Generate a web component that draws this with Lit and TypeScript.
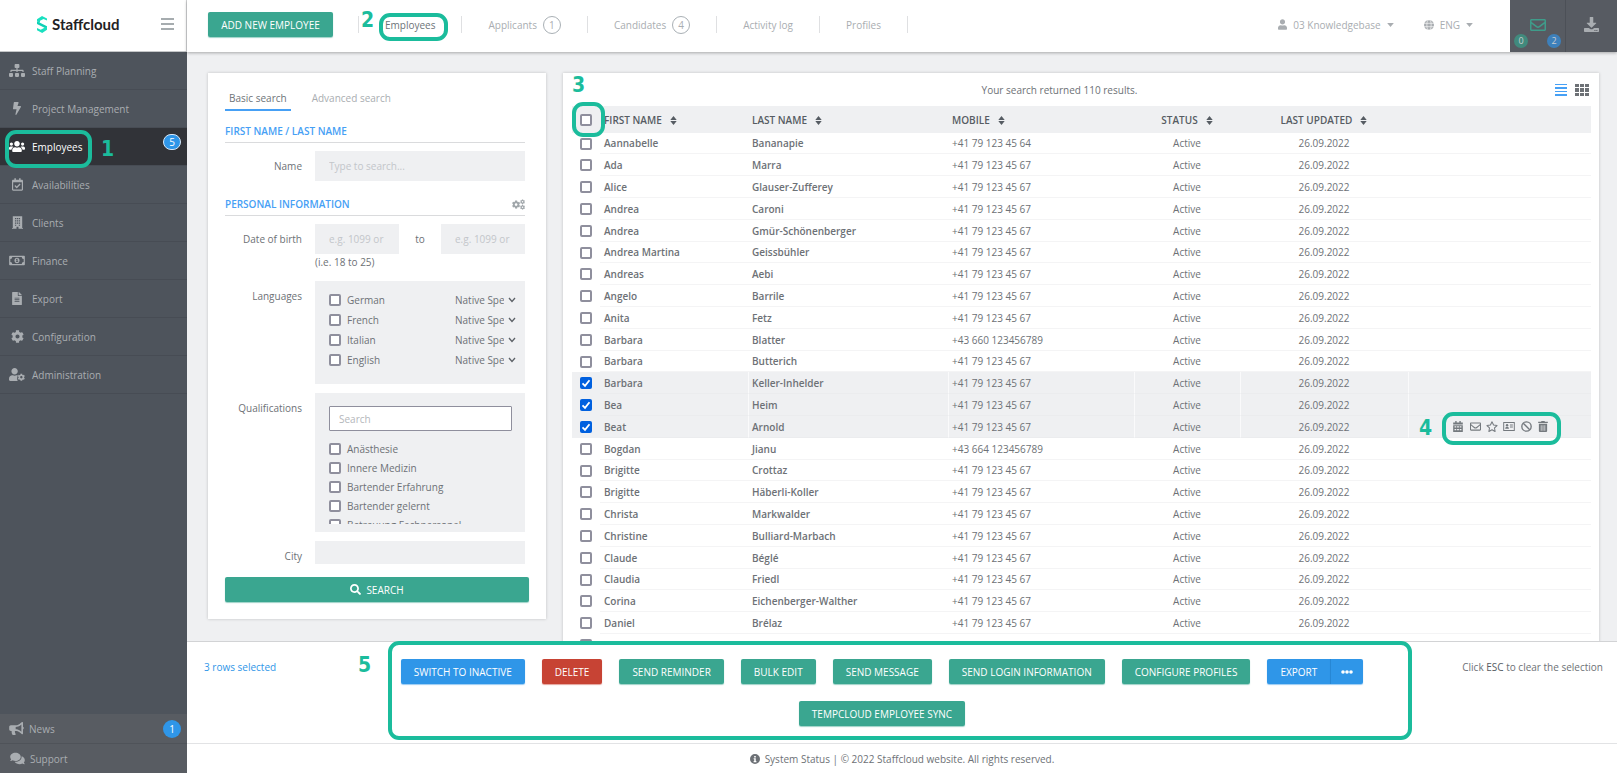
import { LitElement, html, svg, css, nothing } from "lit";
import type { SVGTemplateResult } from "lit";
import { customElement, state } from "lit/decorators.js";
import { classMap } from "lit/directives/class-map.js";

interface Glyph {
  box: string;
  body: SVGTemplateResult;
}

const COG =
  "M487.4 315.7l-42.6-24.6c4.3-23.2 4.3-47 0-70.2l42.6-24.6c4.9-2.8 7.1-8.6 5.5-14-11.1-35.6-30-67.8-54.7-94.6-3.8-4.1-10-5.1-14.8-2.3L380.8 110c-17.9-15.4-38.5-27.3-60.8-35.1V25.8c0-5.6-3.9-10.5-9.4-11.7-36.7-8.2-74.3-7.8-109.2 0-5.5 1.2-9.4 6.1-9.4 11.7V75c-22.2 7.9-42.8 19.8-60.8 35.1L88.7 85.5c-4.9-2.8-11-1.9-14.8 2.3-24.7 26.7-43.6 58.9-54.7 94.6-1.7 5.4.6 11.2 5.5 14L67.3 221c-4.3 23.2-4.3 47 0 70.2l-42.6 24.6c-4.9 2.8-7.1 8.6-5.5 14 11.1 35.6 30 67.8 54.7 94.6 3.8 4.1 10 5.1 14.8 2.3l42.6-24.6c17.9 15.4 38.5 27.3 60.8 35.1v49.2c0 5.6 3.9 10.5 9.4 11.7 36.7 8.2 74.3 7.8 109.2 0 5.5-1.2 9.4-6.1 9.4-11.7v-49.2c22.2-7.9 42.8-19.8 60.8-35.1l42.6 24.6c4.9 2.8 11 1.9 14.8-2.3 24.7-26.7 43.6-58.9 54.7-94.6 1.5-5.5-.7-11.3-5.6-14.1zM256 336c-44.1 0-80-35.9-80-80s35.9-80 80-80 80 35.9 80 80-35.9 80-80 80z";
const USER =
  "M224 256c70.7 0 128-57.3 128-128S294.7 0 224 0 96 57.3 96 128s57.3 128 128 128zm89.6 32h-16.7c-22.2 10.2-46.9 16-72.9 16s-50.6-5.8-72.9-16h-16.7C60.2 288 0 348.2 0 422.4V464c0 26.5 21.5 48 48 48h352c26.5 0 48-21.5 48-48v-41.6c0-74.2-60.2-134.4-134.4-134.4z";

const glyphs: Record<string, Glyph> = {
  sitemap: {
    box: "0 0 640 512",
    body: svg`<path d="M128 352H32c-17.67 0-32 14.33-32 32v96c0 17.67 14.33 32 32 32h96c17.67 0 32-14.33 32-32v-96c0-17.67-14.33-32-32-32zm-24-80h192v48h48v-48h192v48h48v-57.59c0-21.17-17.23-38.41-38.41-38.41H344v-64h40c17.67 0 32-14.33 32-32V32c0-17.67-14.33-32-32-32H256c-17.67 0-32 14.33-32 32v96c0 17.67 14.33 32 32 32h40v64H94.41C73.23 224 56 241.23 56 262.41V320h48v-48zm264 80h-96c-17.67 0-32 14.33-32 32v96c0 17.67 14.33 32 32 32h96c17.67 0 32-14.33 32-32v-96c0-17.67-14.33-32-32-32zm240 0h-96c-17.67 0-32 14.33-32 32v96c0 17.67 14.33 32 32 32h96c17.67 0 32-14.33 32-32v-96c0-17.67-14.33-32-32-32z"/>`,
  },
  bolt: {
    box: "0 0 320 512",
    body: svg`<path d="M296 160H180.6l42.6-129.8C227.2 15 215.7 0 200 0H56C44 0 33.8 8.9 32.2 20.8l-32 240C-1.7 275.2 9.5 288 24 288h118.7L96.6 482.5c-3.6 15.2 8 29.5 23.3 29.5 8.4 0 16.4-4.4 20.8-12l176-304c9.3-15.9-2.2-36-20.7-36z"/>`,
  },
  users: {
    box: "0 0 640 512",
    body: svg`<path d="M96 224c35.3 0 64-28.7 64-64s-28.7-64-64-64-64 28.7-64 64 28.7 64 64 64zm448 0c35.3 0 64-28.7 64-64s-28.7-64-64-64-64 28.7-64 64 28.7 64 64 64zm32 32h-64c-17.6 0-33.5 7.1-45.1 18.6 40.3 22.1 68.9 62 75.1 109.4h66c17.7 0 32-14.3 32-32v-32c0-35.3-28.7-64-64-64zm-256 0c61.9 0 112-50.1 112-112S381.9 32 320 32 208 82.1 208 144s50.1 112 112 112zm76.8 32h-8.3c-20.8 10-43.9 16-68.5 16s-47.6-6-68.5-16h-8.3C179.6 288 128 339.6 128 403.2V432c0 26.5 21.5 48 48 48h288c26.5 0 48-21.5 48-48v-28.8c0-63.6-51.6-115.2-115.2-115.2zm-223.7-13.4C161.5 263.1 145.6 256 128 256H64c-35.3 0-64 28.7-64 64v32c0 17.7 14.3 32 32 32h65.9c6.3-47.4 34.9-87.3 75.2-109.4z"/>`,
  },
  calendarCheck: {
    box: "0 0 448 512",
    body: svg`<path d="M400 64h-48V12c0-6.627-5.373-12-12-12h-40c-6.627 0-12 5.373-12 12v52H160V12c0-6.627-5.373-12-12-12h-40c-6.627 0-12 5.373-12 12v52H48C21.49 64 0 85.49 0 112v352c0 26.51 21.49 48 48 48h352c26.51 0 48-21.49 48-48V112c0-26.51-21.49-48-48-48zm-6 400H54a6 6 0 0 1-6-6V160h352v298a6 6 0 0 1-6 6zm-52.849-200.65L198.842 404.519c-4.705 4.667-12.303 4.637-16.971-.068l-75.091-75.699c-4.667-4.705-4.637-12.303.068-16.971l22.719-22.536c4.705-4.667 12.303-4.637 16.97.069l44.104 44.461 111.072-110.181c4.705-4.667 12.303-4.637 16.971.068l22.536 22.718c4.667 4.705 4.636 12.303-.069 16.97z"/>`,
  },
  building: {
    box: "0 0 448 512",
    body: svg`<path fill-rule="evenodd" d="M32 0h384v476h32v36H264v-88h-80v88H0v-36h32zM120 72v48h52V72zM198 72v48h52V72zM276 72v48h52V72zM120 164v48h52v-48zM198 164v48h52v-48zM276 164v48h52v-48zM120 256v48h52v-48zM198 256v48h52v-48zM276 256v48h52v-48zM120 344v40h52v-40zM276 344v40h52v-40z"/>`,
  },
  money: {
    box: "0 0 640 448",
    body: svg`<path fill-rule="evenodd" d="M32 32h576q32 0 32 32v320q0 32-32 32H32q-32 0-32-32V64q0-32 32-32zM128 80a80 80 0 0 1-80 80v128a80 80 0 0 1 80 80h384a80 80 0 0 1 80-80V160a80 80 0 0 1-80-80zM320 108c62 0 104 52 104 116s-42 116-104 116-104-52-104-116 42-116 104-116zM280 168v32h20v56h-24v32h92v-32h-24V152h-32z"/>`,
  },
  file: {
    box: "0 0 384 512",
    body: svg`<path d="M224 136V0H24C10.7 0 0 10.7 0 24v464c0 13.3 10.7 24 24 24h336c13.3 0 24-10.7 24-24V160H248c-13.2 0-24-10.8-24-24zm64 236c0 6.6-5.4 12-12 12H108c-6.6 0-12-5.4-12-12v-8c0-6.6 5.4-12 12-12h168c6.6 0 12 5.4 12 12v8zm0-64c0 6.6-5.4 12-12 12H108c-6.6 0-12-5.4-12-12v-8c0-6.6 5.4-12 12-12h168c6.6 0 12 5.4 12 12v8zm0-72v8c0 6.6-5.4 12-12 12H108c-6.6 0-12-5.4-12-12v-8c0-6.6 5.4-12 12-12h168c6.6 0 12 5.4 12 12zm96-114.1v6.1H256V0h6.1c6.4 0 12.5 2.5 17 7l97.9 98c4.5 4.5 7 10.6 7 16.9z"/>`,
  },
  cog: { box: "0 0 512 512", body: svg`<path d=${COG} />` },
  cogs: {
    box: "0 0 640 512",
    body: svg`<path transform="translate(-8 50) scale(.82)" d=${COG} /><path transform="translate(396 0) scale(.48)" d=${COG} /><path transform="translate(396 268) scale(.48)" d=${COG} />`,
  },
  userCog: {
    box: "0 0 640 512",
    body: svg`<path d="M224 256c70.7 0 128-57.3 128-128S294.7 0 224 0 96 57.3 96 128s57.3 128 128 128zm89.6 32h-16.7c-22.2 10.2-46.9 16-72.9 16s-50.6-5.8-72.9-16h-16.7C60.2 288 0 348.2 0 422.4V464c0 26.5 21.5 48 48 48h300c-30-60-30-160 8-218-13-4-28-6-42.4-6z"/><path transform="translate(345 218) scale(.58)" d=${COG} />`,
  },
  user: { box: "0 0 448 512", body: svg`<path d=${USER} />` },
  bullhorn: {
    box: "0 0 576 512",
    body: svg`<path d="M576 240c0-23.63-12.95-44.04-32-55.12V32.01C544 23.26 537.02 0 512 0c-7.12 0-14.19 2.38-19.98 7.02l-85.03 68.03C364.28 109.19 310.66 128 256 128H64c-35.35 0-64 28.65-64 64v96c0 35.35 28.65 64 64 64h33.7c-1.39 10.48-2.18 21.14-2.18 32 0 39.77 9.26 77.35 25.56 110.94 5.19 10.69 16.52 17.06 28.4 17.06h74.28c26.05 0 41.69-29.84 25.9-50.56-16.4-21.52-26.15-48.36-26.15-77.44 0-11.11 1.62-21.79 4.41-32H256c54.66 0 108.28 18.81 150.98 52.95l85.03 68.03a32.023 32.023 0 0 0 19.98 7.02c24.92 0 32-22.78 32-32V295.13C563.05 284.04 576 263.63 576 240zm-96 141.42l-33.05-26.44C392.95 311.78 325.12 288 256 288v-96c69.12 0 136.95-23.78 190.95-66.98L480 98.58v282.84z"/>`,
  },
  comments: {
    box: "0 0 576 512",
    body: svg`<path d="M416 192c0-88.4-93.1-160-208-160S0 103.6 0 192c0 34.3 14.1 65.9 38 92-13.4 30.2-35.5 54.2-35.8 54.5-2.2 2.3-2.8 5.7-1.5 8.7S4.8 352 8 352c36.6 0 66.9-12.3 88.7-25 32.2 15.7 70.3 25 111.3 25 114.9 0 208-71.6 208-160zm122 220c23.9-26 38-57.7 38-92 0-66.9-53.5-124.2-129.3-148.1.9 6.6 1.3 13.3 1.3 20.1 0 105.9-107.7 192-240 192-10.8 0-21.3-.8-31.7-1.9C207.8 439.6 281.8 480 368 480c41 0 79.1-9.2 111.3-25 21.8 12.7 52.1 25 88.7 25 3.2 0 6.1-1.9 7.3-4.8 1.3-2.9.7-6.3-1.5-8.7-.3-.3-22.4-24.2-35.8-54.5z"/>`,
  },
  envelope: {
    box: "0 64 512 384",
    body: svg`<path d="M464 64H48C21.49 64 0 85.49 0 112v288c0 26.51 21.49 48 48 48h416c26.51 0 48-21.49 48-48V112c0-26.51-21.49-48-48-48zm0 48v40.805c-22.422 18.259-58.168 46.651-134.587 106.49-16.841 13.247-50.201 45.072-73.413 44.701-23.208.375-56.579-31.459-73.413-44.701C106.18 199.465 70.425 171.067 48 152.805V112h416zM48 400V214.398c22.914 18.251 55.409 43.862 104.938 82.646 21.857 17.205 60.134 55.186 103.062 54.955 42.717.231 80.509-37.199 103.053-54.947 49.528-38.783 82.032-64.401 104.947-82.653V400H48z"/>`,
  },
  download: {
    box: "0 0 512 512",
    body: svg`<path fill-rule="evenodd" d="M208 0h96q12 0 12 12v180h92q22 0 10 20L270 358q-14 14-28 0L94 212q-12-20 10-20h92V12q0-12 12-12zM24 372h140l62 42q30 16 60 0l62-42h140q24 0 24 24v92q0 24-24 24H24q-24 0-24-24v-92q0-24 24-24zM356 446v32h36v-32zM420 446v32h36v-32z"/>`,
  },
  search: {
    box: "0 0 512 512",
    body: svg`<path d="M505 442.7L405.3 343c-4.5-4.5-10.6-7-17-7H372c27.6-35.3 44-79.7 44-128C416 93.1 322.9 0 208 0S0 93.1 0 208s93.1 208 208 208c48.3 0 92.7-16.4 128-44v16.3c0 6.4 2.5 12.5 7 17l99.7 99.7c9.4 9.4 24.6 9.4 33.9 0l28.3-28.3c9.4-9.4 9.4-24.6.1-34zM208 336c-70.7 0-128-57.2-128-128 0-70.7 57.2-128 128-128 70.7 0 128 57.2 128 128 0 70.7-57.2 128-128 128z"/>`,
  },
  globe: {
    box: "0 0 16 16",
    body: svg`<circle cx="8" cy="8" r="8"/><g fill="none" stroke="#fff" stroke-width="1"><ellipse cx="8" cy="8" rx="3.4" ry="8.5"/><path d="M0 5.300h16M0 10.700h16"/></g>`,
  },
  info: {
    box: "0 0 16 16",
    body: svg`<path fill-rule="evenodd" d="M8 0a8 8 0 1 1 0 16A8 8 0 0 1 8 0zM6.700 3v2.600h2.600V3zM5.800 6.700v1.600h1v3h-1V13h4.400v-1.700h-1V6.700z"/>`,
  },
  caret: { box: "0 0 10 6", body: svg`<path d="M0 0h10L5 6z"/>` },
  sort: { box: "0 0 7 9", body: svg`<path d="M3.500 0L6.700 4H.3zM3.500 9L.3 5h6.400z"/>` },
  list: {
    box: "0 0 12 12",
    body: svg`<path d="M0 0h12v1H0zM0 3h12v2H0zM0 7h12v1H0zM0 10h12v2H0z"/>`,
  },
  grid: {
    box: "0 0 14 12",
    body: svg`<path d="M0 0h4v3H0zM5 0h4v3H5zM10 0h4v3h-4zM0 4h4v4H0zM5 4h4v4H5zM10 4h4v4h-4zM0 9h4v3H0zM5 9h4v3H5zM10 9h4v3h-4z"/>`,
  },
  menu: {
    box: "0 0 13 12",
    body: svg`<path d="M0 0h13v2H0zM0 5h13v2H0zM0 10h13v2H0z"/>`,
  },
  calendar: {
    box: "0 0 14 16",
    body: svg`<path fill-rule="evenodd" d="M3 0h2v2h4V0h2v2h3v3H0V2h3zM0 6h14v10H0zM2 7.500v2h2.500v-2zM5.700 7.500v2h2.600v-2zM9.500 7.500v2H12v-2zM2 11.500v2h2.500v-2zM5.700 11.500v2h2.600v-2zM9.500 11.500v2H12v-2z"/>`,
  },
  star: {
    box: "0 0 18 17",
    body: svg`<path fill="none" stroke="currentColor" stroke-width="1.600" stroke-linejoin="round" d="M9 1.300l2.400 4.900 5.400.8-3.900 3.800.9 5.400L9 13.600l-4.800 2.600.9-5.400L1.200 7l5.400-.8z"/>`,
  },
  idCard: {
    box: "0 0 18 14",
    body: svg`<path fill-rule="evenodd" d="M0 0h18v14H0zM1.500 1.500v11h15v-11z"/><circle cx="6" cy="5.200" r="1.900"/><path d="M3 10.500q0-3 3-3t3 3zM10.500 4h4.500v1.500h-4.500zM10.500 7h4.500v1.500h-4.500z"/>`,
  },
  ban: {
    box: "0 0 16 16",
    body: svg`<g fill="none" stroke="currentColor" stroke-width="2"><circle cx="8" cy="8" r="6.800"/><path d="M3.300 3.300l9.400 9.400"/></g>`,
  },
  trash: {
    box: "0 0 14 16",
    body: svg`<path fill-rule="evenodd" d="M0 1h4l1-1h4l1 1h4v2H0zM1 4h12v10.500q0 1.500-1.500 1.500h-9Q1 16 1 14.500zM3.800 6v8h1V6zM6.500 6v8h1V6zM9.200 6v8h1V6z"/>`,
  },
  dots: {
    box: "0 0 12 4",
    body: svg`<circle cx="2" cy="2" r="1.800"/><circle cx="6" cy="2" r="1.800"/><circle cx="10" cy="2" r="1.800"/>`,
  },
};

const icon = (name: string, width: number, height: number) => html`<svg
  aria-hidden="true"
  fill="currentColor"
  width=${width}
  height=${height}
  viewBox=${glyphs[name].box}
>${glyphs[name].body}</svg>`;

const base = css`
  *,
  *::before,
  *::after {
    box-sizing: border-box;
  }
  svg {
    display: block;
    flex: none;
  }
  a {
    color: inherit;
    text-decoration: none;
  }
  ul {
    list-style: none;
    margin: 0;
    padding: 0;
  }
  button,
  input,
  select {
    font: inherit;
    color: inherit;
    margin: 0;
  }
  button {
    border: 0;
    padding: 0;
    background: none;
    cursor: pointer;
  }
  input[type="checkbox"] {
    appearance: none;
    display: block;
    flex: none;
    width: 12px;
    height: 12px;
    border: 2px solid #8f8f9d;
    border-radius: 2px;
    background: #fff;
  }
  input[type="checkbox"]:checked {
    border: 0;
    background: #0060df
      url("data:image/svg+xml,%3Csvg xmlns='http://www.w3.org/2000/svg' viewBox='0 0 12 12'%3E%3Cpath d='M2.500 6.300l2.500 2.500 4.500-5.600' fill='none' stroke='%23fff' stroke-width='1.800'/%3E%3C/svg%3E");
  }
  .btn {
    display: flex;
    align-items: center;
    justify-content: center;
    gap: 5px;
    height: 25px;
    padding: 0 13px;
    border-radius: 2px;
    background: #3aa690;
    color: #fff;
    box-shadow: 0 1px 1px rgba(58, 166, 144, 0.5);
    white-space: nowrap;
  }
  .frame {
    position: absolute;
    border: 4px solid #1bbc9c;
    border-radius: 11px;
    pointer-events: none;
  }
  .step {
    position: absolute;
    color: #1bbc9c;
    font: bold 21px/16px "DejaVu Sans Condensed", "DejaVu Sans", sans-serif;
  }
`;

/* ---------- sidebar ---------- */

@customElement("app-sidebar")
export class AppSidebar extends LitElement {
  static styles = [
    base,
    css`
      :host {
        display: flex;
        flex-direction: column;
        background: #4e545c;
        color: #a9adb1;
      }
      .brand {
        display: flex;
        align-items: center;
        justify-content: space-between;
        height: 52px;
        padding: 0 12px 3px 37px;
        background: #fff;
        border-right: 1px solid #d4d5d7;
        border-bottom: 1px solid #c4c6c8;
      }
      .logo {
        display: flex;
        align-items: center;
        gap: 5px;
        color: #1f2124;
        font: bold 15px/20px Lato, sans-serif;
      }
      .toggle {
        color: #a6acaf;
      }
      .item {
        position: relative;
        border-bottom: 1px solid #474c54;
      }
      .item.active {
        background: #313338;
        color: #fff;
      }
      .link {
        display: flex;
        align-items: center;
        height: 37px;
        padding-left: 9px;
        gap: 7px;
      }
      .slot {
        display: flex;
        justify-content: center;
        width: 16px;
      }
      .badge {
        position: absolute;
        right: 6px;
        top: 6px;
        width: 18px;
        height: 16px;
        border-radius: 8px;
        border: 1px solid #d7e9fa;
        background: #2f96e8;
        color: #fff;
        line-height: 14px;
        text-align: center;
      }
      .foot {
        margin-top: auto;
        background: #585c62;
      }
      .foot .item {
        border-color: #4f5359;
      }
      .foot .item:last-child {
        border: 0;
      }
      .foot .link {
        height: 29px;
        gap: 5px;
      }
      .foot .badge {
        height: 18px;
        border: 0;
        border-radius: 9px;
        line-height: 18px;
      }
      .frame1 {
        left: 5px;
        top: 2px;
        width: 87px;
        height: 38px;
        z-index: 1;
      }
      .step1 {
        left: 101px;
        top: 13px;
      }
    `,
  ];

  private items: [string, string, number, number][] = [
    ["Staff Planning", "sitemap", 16, 13],
    ["Project Management", "bolt", 8, 13],
    ["Employees", "users", 16, 13],
    ["Availabilities", "calendarCheck", 11, 13],
    ["Clients", "building", 11, 13],
    ["Finance", "money", 16, 11],
    ["Export", "file", 10, 13],
    ["Configuration", "cog", 13, 13],
    ["Administration", "userCog", 16, 13],
  ];

  render() {
    return html`
      <div class="brand">
        <a class="logo" href="#">
          <svg width="10" height="17" viewBox="0 0 10 17" aria-hidden="true">
            <path fill="#19e0c0" d="M5 0l5 2.500v2L6.500 3 3 4.800v2L0 5.300V3.200z" />
            <path fill="#0fd0b5" d="M0 5.300l10 5v2.600L0 7.900z" />
            <path fill="#19e0c0" d="M10 10.300v3.500L5.200 17 0 14.200v-2.100l3.700 1.700L7 12z" />
          </svg>
          Staffcloud
        </a>
        <button class="toggle" aria-label="Toggle menu">${icon("menu", 13, 12)}</button>
      </div>
      <ul>
        ${this.items.map(([label, glyph, w, h]) => {
          const active = label === "Employees";
          return html`<li class=${classMap({ item: true, active })}>
            <a class="link" href="#"><span class="slot">${icon(glyph, w, h)}</span>${label}</a>
            ${active
              ? html`<span class="badge">5</span><span class="frame frame1"></span><span class="step step1">1</span>`
              : nothing}
          </li>`;
        })}
      </ul>
      <ul class="foot">
        <li class="item">
          <a class="link" href="#">${icon("bullhorn", 15, 13)}News</a><span class="badge">1</span>
        </li>
        <li class="item"><a class="link" href="#"><span class="slot">${icon("comments", 15, 13)}</span>Support</a></li>
      </ul>
    `;
  }
}

/* ---------- top bar ---------- */

@customElement("app-topbar")
export class AppTopbar extends LitElement {
  static styles = [
    base,
    css`
      :host {
        display: flex;
        align-items: center;
        height: 52px;
        padding-left: 21px;
        background: #fff;
        color: #a9adb1;
        box-shadow: 0 1px 3px rgba(0, 0, 0, 0.3);
        position: relative;
        z-index: 1;
      }
      .add {
        width: 125px;
        margin: 0 25px 3px 0;
      }
      .tabs {
        display: flex;
        margin-bottom: 3px;
        border-left: 1px solid #dfe0e2;
      }
      .tab {
        position: relative;
        border-right: 1px solid #dfe0e2;
      }
      .link {
        display: flex;
        align-items: center;
        gap: 6px;
        height: 17px;
        padding: 0 26px;
        white-space: nowrap;
      }
      .active {
        color: #6d7378;
      }
      .count {
        width: 18px;
        height: 18px;
        border: 1px solid #a9b0b5;
        border-radius: 9px;
        line-height: 16px;
        text-align: center;
      }
      .frame2 {
        left: 20px;
        top: -3px;
        width: 69px;
        height: 28px;
      }
      .step2 {
        left: 2px;
        top: -4px;
      }
      .tools {
        display: flex;
        gap: 30px;
        margin-left: auto;
        margin-right: 37px;
        padding-bottom: 3px;
      }
      .drop {
        display: flex;
        align-items: center;
        gap: 6px;
        white-space: nowrap;
      }
      .inbox,
      .save {
        display: flex;
        align-items: center;
        justify-content: center;
        height: 52px;
        padding-bottom: 3px;
        background: #575b62;
      }
      .inbox {
        position: relative;
        width: 56px;
        border-right: 1px solid #4c5057;
        color: #3f9c8a;
      }
      .save {
        width: 51px;
      }
      .pip {
        position: absolute;
        bottom: 4px;
        width: 14px;
        height: 14px;
        border-radius: 7px;
        background: #418a7d;
        color: #c9ccd0;
        font-size: 9px;
        line-height: 14px;
      }
      .unread {
        left: 4px;
      }
      .total {
        right: 4px;
        background: #3d80bb;
      }
    `,
  ];

  render() {
    const tabs: [string, number?][] = [
      ["Employees"],
      ["Applicants", 1],
      ["Candidates", 4],
      ["Activity log"],
      ["Profiles"],
    ];
    return html`
      <button class="btn add">ADD NEW EMPLOYEE</button>
      <ul class="tabs">
        ${tabs.map(
          ([label, count], i) => html`<li class="tab">
            <a class=${classMap({ link: true, active: i === 0 })} href="#"
              >${label}${count ? html`<span class="count">${count}</span>` : nothing}</a
            >
            ${i === 0 ? html`<span class="frame frame2"></span><span class="step step2">2</span>` : nothing}
          </li>`
        )}
      </ul>
      <div class="tools">
        <button class="drop">${icon("user", 9, 11)}03 Knowledgebase ${icon("caret", 7, 4)}</button>
        <button class="drop">${icon("globe", 10, 10)}ENG ${icon("caret", 7, 4)}</button>
      </div>
      <button class="inbox" aria-label="Messages">
        ${icon("envelope", 16, 12)}<span class="pip unread">0</span><span class="pip total">2</span>
      </button>
      <button class="save" aria-label="Downloads">${icon("download", 15, 15)}</button>
    `;
  }
}

/* ---------- search form ---------- */

@customElement("employee-search")
export class EmployeeSearch extends LitElement {
  static styles = [
    base,
    css`
      :host {
        display: block;
        background: #fff;
        padding: 17px;
        box-shadow: 0 0 3px rgba(0, 0, 0, 0.2);
        line-height: 16px;
      }
      .tabs {
        display: flex;
        gap: 17px;
        color: #a9adb1;
      }
      .tab {
        padding: 0 4px 3px;
        line-height: 16px;
        border-bottom: 2px solid transparent;
      }
      .tab.current {
        color: #6d7378;
        border-color: #46a0f5;
      }
      .form {
        padding-right: 4px;
      }
      .title {
        display: flex;
        align-items: center;
        justify-content: space-between;
        margin: 12px 0 8px;
        padding-bottom: 3px;
        border-bottom: 1px solid #dadbdd;
        color: #46a0f5;
        font-weight: 600;
      }
      .row + .title {
        margin-top: 15px;
      }
      .gear {
        color: #a0a6aa;
      }
      .row {
        display: grid;
        grid-template-columns: 77px 1fr;
        column-gap: 13px;
        margin-bottom: 9px;
      }
      .birth {
        margin-bottom: 11px;
      }
      .label {
        padding-top: 7px;
        text-align: right;
      }
      .field {
        display: block;
        width: 100%;
        min-width: 0;
        height: 30px;
        padding: 0 14px;
        border: 0;
        background: #eff0f2;
      }
      .field::placeholder {
        color: #c3c6ca;
      }
      .range {
        display: grid;
        grid-template-columns: 2fr 1fr 2fr;
        text-align: center;
        line-height: 30px;
      }
      .well {
        background: #eff0f2;
        padding: 9px 9px 14px 14px;
      }
      .quals {
        padding: 13px 13px 8px 14px;
      }
      .option {
        display: flex;
        align-items: center;
        gap: 6px;
        height: 19px;
      }
      .lang {
        height: 20px;
        justify-content: space-between;
      }
      .tick {
        display: flex;
        align-items: center;
        gap: 6px;
      }
      .level {
        appearance: none;
        width: 61px;
        padding: 0 12px 0 0;
        border: 0;
        background: url("data:image/svg+xml,%3Csvg xmlns='http://www.w3.org/2000/svg' viewBox='0 0 8 6'%3E%3Cpath d='M1 1l3 3.500L7 1' fill='none' stroke='%235c6167' stroke-width='1.300'/%3E%3C/svg%3E")
          right center / 8px 6px no-repeat;
        line-height: 16px;
      }
      .find {
        display: block;
        width: 100%;
        height: 25px;
        margin-bottom: 8px;
        padding: 0 9px;
        border: 1px solid #8f8f9d;
        border-radius: 1px;
        background: #fff;
      }
      .find::placeholder {
        color: #b4b7bb;
      }
      .choices {
        height: 85px;
        overflow-y: auto;
        scrollbar-width: none;
      }
      .city {
        height: 23px;
      }
      .go {
        width: 100%;
        margin-top: 13px;
      }
    `,
  ];

  render() {
    return html`
      <div class="tabs">
        <button class="tab current">Basic search</button>
        <button class="tab">Advanced search</button>
      </div>
      <div class="form">
        <div class="title">FIRST NAME / LAST NAME</div>
        <div class="row">
          <label class="label" for="name">Name</label>
          <input class="field" id="name" placeholder="Type to search..." />
        </div>
        <div class="title">
          PERSONAL INFORMATION
          <button class="gear" aria-label="Configure fields">${icon("cogs", 13, 11)}</button>
        </div>
        <div class="row birth">
          <label class="label" for="from">Date of birth</label>
          <div>
            <div class="range">
              <input class="field" id="from" placeholder="e.g. 1099 or" />
              <label for="until">to</label>
              <input class="field" id="until" placeholder="e.g. 1099 or" />
            </div>
            (i.e. 18 to 25)
          </div>
        </div>
        <div class="row">
          <span class="label">Languages</span>
          <div class="well">
            ${["German", "French", "Italian", "English"].map(
              (name) => html`<div class="option lang">
                <label class="tick"><input type="checkbox" />${name}</label>
                <select class="level" aria-label="${name} level">
                  <option>Native Speaker</option>
                </select>
              </div>`
            )}
          </div>
        </div>
        <div class="row">
          <label class="label" for="qual">Qualifications</label>
          <div class="well quals">
            <input class="find" id="qual" placeholder="Search" />
            <div class="choices">
              ${["Anästhesie", "Innere Medizin", "Bartender Erfahrung", "Bartender gelernt", "Betreuung Fachpersonal"].map(
                (name) => html`<label class="option"><input type="checkbox" />${name}</label>`
              )}
            </div>
          </div>
        </div>
        <div class="row">
          <label class="label" for="city">City</label>
          <input class="field city" id="city" />
        </div>
      </div>
      <button class="btn go">${icon("search", 11, 11)}SEARCH</button>
    `;
  }
}

/* ---------- results ---------- */

const MOBILE = "+41 79 123 45 67";
const people: [string, string, string][] = [
  ["Aannabelle", "Bananapie", "+41 79 123 45 64"],
  ["Ada", "Marra", MOBILE],
  ["Alice", "Glauser-Zufferey", MOBILE],
  ["Andrea", "Caroni", MOBILE],
  ["Andrea", "Gmür-Schönenberger", MOBILE],
  ["Andrea Martina", "Geissbühler", MOBILE],
  ["Andreas", "Aebi", MOBILE],
  ["Angelo", "Barrile", MOBILE],
  ["Anita", "Fetz", MOBILE],
  ["Barbara", "Blatter", "+43 660 123456789"],
  ["Barbara", "Butterich", MOBILE],
  ["Barbara", "Keller-Inhelder", MOBILE],
  ["Bea", "Heim", MOBILE],
  ["Beat", "Arnold", MOBILE],
  ["Bogdan", "Jianu", "+43 664 123456789"],
  ["Brigitte", "Crottaz", MOBILE],
  ["Brigitte", "Häberli-Koller", MOBILE],
  ["Christa", "Markwalder", MOBILE],
  ["Christine", "Bulliard-Marbach", MOBILE],
  ["Claude", "Béglé", MOBILE],
  ["Claudia", "Friedl", MOBILE],
  ["Corina", "Eichenberger-Walther", MOBILE],
  ["Daniel", "Brélaz", MOBILE],
  ["Daniel", "Fässler", MOBILE],
];

@customElement("employee-results")
export class EmployeeResults extends LitElement {
  static styles = [
    base,
    css`
      :host {
        display: block;
        position: relative;
        background: #fff;
        padding: 0 8px 0 9px;
        box-shadow: 0 0 3px rgba(0, 0, 0, 0.2);
      }
      .bar {
        display: flex;
        align-items: center;
        gap: 8px;
        height: 33px;
        padding-right: 2px;
      }
      .summary {
        flex: 1;
        text-align: center;
      }
      .view {
        color: #6d7176;
      }
      .view.on {
        color: #46a0f5;
      }
      table {
        width: 100%;
        table-layout: fixed;
        border-collapse: separate;
        border-spacing: 0;
      }
      .c-check { width: 28px; }
      .c-first { width: 148px; }
      .c-last { width: 200px; }
      .c-mobile { width: 186px; }
      .c-status { width: 106px; }
      .c-date { width: 168px; }
      th {
        height: 27px;
        padding: 0 4px;
        background: #eff0f2;
        color: #565c63;
        font-weight: 600;
        text-align: left;
      }
      td {
        padding: 0 4px;
        border-bottom: 1px solid #f4f4f5;
        white-space: nowrap;
      }
      th:first-child,
      td:first-child {
        padding: 0 0 0 8px;
        border-bottom: 0;
      }
      .sort {
        display: inline-flex;
        align-items: center;
        gap: 8px;
        vertical-align: middle;
      }
      .mid {
        text-align: center;
      }
      .name {
        font-weight: 600;
      }
      tbody tr {
        height: 22px;
      }
      tbody tr:nth-child(5n + 1) {
        height: 21px;
      }
      .picked td {
        background: #eff0f2;
        border-bottom-color: #ebecee;
      }
      .picked td:nth-child(n + 3) {
        border-left: 1px solid #fafafb;
        padding-left: 3px;
      }
      .acts {
        position: relative;
      }
      .tools {
        display: flex;
        gap: 5px;
        padding-left: 40px;
      }
      .tool {
        display: flex;
        align-items: center;
        justify-content: center;
        width: 12px;
        color: #74797e;
      }
      .frame4 {
        left: 33px;
        top: -4px;
        width: 119px;
        height: 33px;
      }
      .step4 {
        left: 10px;
        top: 4px;
      }
      .frame3 {
        left: 9px;
        top: 29px;
        width: 33px;
        height: 35px;
      }
      .step3 {
        left: 9px;
        top: 4px;
      }
    `,
  ];

  @state() private picked = new Set([11, 12, 13]);

  private toggle(i: number) {
    const next = new Set(this.picked);
    next.has(i) ? next.delete(i) : next.add(i);
    this.picked = next;
  }

  render() {
    const heads: [string, boolean][] = [
      ["FIRST NAME", false],
      ["LAST NAME", false],
      ["MOBILE", false],
      ["STATUS", true],
      ["LAST UPDATED", true],
    ];
    const tools: [string, string, number, number][] = [
      ["Calendar", "calendar", 10, 11],
      ["Message", "envelope", 11, 9],
      ["Favourite", "star", 12, 11],
      ["Profile", "idCard", 12, 9],
      ["Block", "ban", 11, 11],
      ["Delete", "trash", 10, 11],
    ];
    return html`
      <div class="bar">
        <span class="summary">Your search returned 110 results.</span>
        <button class="view on" aria-label="List view">${icon("list", 12, 12)}</button>
        <button class="view" aria-label="Grid view">${icon("grid", 14, 12)}</button>
      </div>
      <table>
        <colgroup>
          <col class="c-check" /><col class="c-first" /><col class="c-last" /><col class="c-mobile" />
          <col class="c-status" /><col class="c-date" /><col />
        </colgroup>
        <thead>
          <tr>
            <th><input type="checkbox" aria-label="Select all" /></th>
            ${heads.map(
              ([label, mid]) => html`<th class=${mid ? "mid" : ""}>
                <span class="sort">${label}${icon("sort", 7, 9)}</span>
              </th>`
            )}
            <th></th>
          </tr>
        </thead>
        <tbody>
          ${people.map(
            ([first, last, mobile], i) => html`<tr class=${classMap({ picked: this.picked.has(i) })}>
              <td>
                <input
                  type="checkbox"
                  aria-label="${first} ${last}"
                  .checked=${this.picked.has(i)}
                  @change=${() => this.toggle(i)}
                />
              </td>
              <td class="name">${first}</td>
              <td class="name">${last}</td>
              <td>${mobile}</td>
              <td class="mid">Active</td>
              <td class="mid">26.09.2022</td>
              <td class="acts">
                ${i === 13
                  ? html`<div class="tools">
                        ${tools.map(
                          ([label, glyph, w, h]) =>
                            html`<button class="tool" aria-label=${label}>${icon(glyph, w, h)}</button>`
                        )}
                      </div>
                      <span class="frame frame4"></span><span class="step step4">4</span>`
                  : nothing}
              </td>
            </tr>`
          )}
        </tbody>
      </table>
      <span class="frame frame3"></span><span class="step step3">3</span>
    `;
  }
}

/* ---------- bulk actions ---------- */

@customElement("bulk-actions")
export class BulkActions extends LitElement {
  static styles = [
    base,
    css`
      :host {
        display: grid;
        grid-template-columns: 201px 1fr 241px;
        background: #fff;
        border-top: 1px solid #d2d3d5;
        border-bottom: 1px solid #e2e3e5;
        line-height: 16px;
      }
      .count {
        padding: 17px 0 0 17px;
        color: #2f96e8;
      }
      .hint {
        padding: 17px 14px 0 0;
        text-align: right;
      }
      .key {
        color: #565c63;
      }
      .list {
        position: relative;
        display: flex;
        flex-wrap: wrap;
        justify-content: center;
        gap: 17px;
        padding: 17px 0;
      }
      .blue {
        background: #2f96e8;
        box-shadow: 0 1px 1px rgba(47, 150, 232, 0.5);
      }
      .red {
        background: #c74334;
        box-shadow: 0 1px 1px rgba(199, 67, 52, 0.5);
      }
      .group {
        display: flex;
      }
      .main {
        border-radius: 2px 0 0 2px;
      }
      .more {
        border-left: 1px solid #2787d4;
        border-radius: 0 2px 2px 0;
        padding: 0 10px;
      }
      .frame5 {
        left: 0;
        right: -36px;
        top: -1px;
        bottom: 3px;
      }
      .step5 {
        left: -30px;
        top: 15px;
      }
    `,
  ];

  render() {
    return html`
      <span class="count">3 rows selected</span>
      <div class="list">
        <button class="btn blue">SWITCH TO INACTIVE</button>
        <button class="btn red">DELETE</button>
        <button class="btn">SEND REMINDER</button>
        <button class="btn">BULK EDIT</button>
        <button class="btn">SEND MESSAGE</button>
        <button class="btn">SEND LOGIN INFORMATION</button>
        <button class="btn">CONFIGURE PROFILES</button>
        <span class="group">
          <button class="btn blue main">EXPORT</button>
          <button class="btn blue more" aria-label="More export options">${icon("dots", 12, 4)}</button>
        </span>
        <button class="btn">TEMPCLOUD EMPLOYEE SYNC</button>
        <span class="frame frame5"></span><span class="step step5">5</span>
      </div>
      <span class="hint">Click <span class="key">ESC</span> to clear the selection</span>
    `;
  }
}

/* ---------- page ---------- */

@customElement("app-root")
export class AppRoot extends LitElement {
  static styles = [
    base,
    css`
      :host {
        display: grid;
        grid-template-columns: 187px minmax(0, 1fr);
        height: 100vh;
        overflow: hidden;
        background: #eff0f2;
        color: #6d7176;
        font: 10px/16px "Open Sans", sans-serif;
      }
      .page {
        display: flex;
        flex-direction: column;
        min-height: 0;
      }
      .body {
        flex: 1;
        min-height: 0;
        overflow: hidden;
        display: grid;
        grid-template-columns: 338px minmax(0, 1fr);
        gap: 17px;
        align-items: start;
        padding: 21px 18px 0 21px;
      }
      .footer {
        display: flex;
        align-items: center;
        justify-content: center;
        gap: 5px;
        height: 29px;
        background: #fff;
      }
    `,
  ];

  render() {
    return html`
      <app-sidebar></app-sidebar>
      <div class="page">
        <app-topbar></app-topbar>
        <main class="body">
          <employee-search></employee-search>
          <employee-results></employee-results>
        </main>
        <bulk-actions></bulk-actions>
        <footer class="footer">
          ${icon("info", 10, 10)}
          <span><a href="#">System Status</a> | © 2022 Staffcloud website. All rights reserved.</span>
        </footer>
      </div>
    `;
  }
}
